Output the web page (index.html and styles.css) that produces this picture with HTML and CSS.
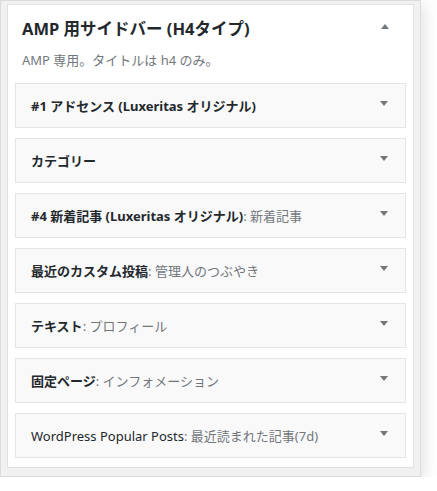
FILE: index.html
```html
<!DOCTYPE html>
<html lang="ja">
<head>
    <meta charset="UTF-8">
    <meta name="viewport" content="width=device-width, initial-scale=1.0">
    <title>AMP 用サイドバー</title>
    <link rel="stylesheet" href="styles.css">
</head>
<body>
    <div class="sidebar-frame">
        <div class="sidebar-panel">
            <div class="sidebar-head">
                <div class="sidebar-title-row">
                    <h2 class="sidebar-title">AMP 用サイドバー (H4タイプ)</h2>
                    <span class="arrow arrow-up"></span>
                </div>
                <p class="sidebar-desc">AMP 専用。タイトルは h4 のみ。</p>
            </div>

            <!-- Widgets -->
            <div class="widget-list">
                <div class="widget">
                    <span class="widget-title"><strong>#1 アドセンス (Luxeritas オリジナル)</strong></span>
                    <span class="arrow"></span>
                </div>
                <div class="widget">
                    <span class="widget-title"><strong>カテゴリー</strong></span>
                    <span class="arrow"></span>
                </div>
                <div class="widget">
                    <span class="widget-title"><strong>#4 新着記事 (Luxeritas オリジナル)</strong><span class="in-title">: 新着記事</span></span>
                    <span class="arrow"></span>
                </div>
                <div class="widget">
                    <span class="widget-title"><strong>最近のカスタム投稿</strong><span class="in-title">: 管理人のつぶやき</span></span>
                    <span class="arrow"></span>
                </div>
                <div class="widget">
                    <span class="widget-title"><strong>テキスト</strong><span class="in-title">: プロフィール</span></span>
                    <span class="arrow"></span>
                </div>
                <div class="widget">
                    <span class="widget-title"><strong>固定ページ</strong><span class="in-title">: インフォメーション</span></span>
                    <span class="arrow"></span>
                </div>
                <div class="widget">
                    <span class="widget-title">WordPress Popular Posts<span class="in-title">: 最近読まれた記事(7d)</span></span>
                    <span class="arrow"></span>
                </div>
            </div>
        </div>
    </div>
</body>
</html>
```

FILE: styles.css
```css
/* General */
body {
    margin: 0;
    padding: 0;
    background-color: #fff;
    font-family: "Noto Sans", "Noto Sans CJK JP", sans-serif;
    color: #23282d;
}

/* Outer grey frame */
.sidebar-frame {
    width: 407px;
    height: 469px;
    padding: 3px 6px 3px 6px;
    background-color: #f1f1f1;
    border: 1px solid #dcdcdc;
    box-shadow: 3px 4px 14px rgba(0, 0, 0, 0.12);
}

.sidebar-panel {
    box-sizing: border-box;
    height: 464px;
    background-color: #fff;
    border: 1px solid #e2e2e2;
    padding: 0 7px 9px 7px;
}

/* Header */
.sidebar-head {
    padding: 12px 7px 0 7px;
}

.sidebar-title-row {
    display: flex;
    align-items: center;
    justify-content: space-between;
}

.sidebar-title {
    margin: 0;
    font-size: 16.5px;
    font-weight: 700;
    line-height: 24px;
}

.sidebar-desc {
    margin: 10px 0 0 0;
    font-size: 13px;
    line-height: 18px;
    color: #72777c;
}

/* Widget boxes */
.widget-list {
    display: flex;
    flex-direction: column;
    gap: 10px;
    margin-top: 14px;
}

.widget {
    box-sizing: border-box;
    height: 45px;
    display: flex;
    align-items: center;
    justify-content: space-between;
    padding: 0 17px 0 15px;
    background-color: #f9f9f9;
    border: 1px solid #e5e5e5;
    font-size: 13px;
}

.widget-title strong {
    font-weight: 700;
}

.in-title {
    color: #72777c;
}

/* Toggle arrows */
.arrow {
    width: 0;
    height: 0;
    border-left: 4px solid transparent;
    border-right: 4px solid transparent;
    border-top: 5px solid #72777c;
    margin-top: -5px;
}

.arrow-up {
    border-top: none;
    border-bottom: 5px solid #72777c;
    margin-right: 10px;
    margin-top: -5px;
}
```
